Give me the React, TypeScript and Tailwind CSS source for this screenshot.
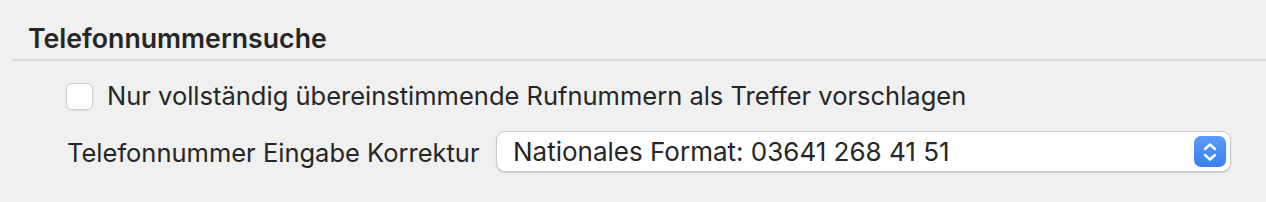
import React from "react";

export default function App() {
  return (
    <div
      className="w-[1266px] h-[202px] bg-[#f0f0f0] text-[#262626] overflow-hidden"
      style={{ fontFamily: "Inter, 'Noto Sans', sans-serif" }}
    >
      <div className="pt-[22px] pl-[28px] h-[59px]">
        <div className="text-[26.7px] leading-[32px] font-semibold">Telefonnummernsuche</div>
      </div>
      <div className="ml-[12px] h-[2px] bg-[#d9d9d9]" />
      <div className="pl-[66px] pt-[19px] flex items-center gap-[14px]">
        <div className="w-[27px] h-[27px] rounded-[6px] bg-white border border-[#cfcfcf] shadow-[0_0.5px_1px_rgba(0,0,0,0.08)]" />
        <span className="text-[25.5px] leading-[32px]">
          Nur vollständig übereinstimmende Rufnummern als Treffer vorschlagen
        </span>
      </div>
      <div className="pl-[67px] pt-[19px] flex items-center">
        <span className="text-[25.5px] leading-[32px] w-[429px] pt-[3px]">Telefonnummer Eingabe Korrektur</span>
        <div className="w-[735px] h-[41px] rounded-[9px] bg-white border border-[#c9c9c9] shadow-[0_1px_1.5px_rgba(0,0,0,0.15)] flex items-center pl-[16px] pr-[4px]">
          <span className="flex-1 text-[26px] leading-[32px]">Nationales Format: 03641 268 41 51</span>
          <div className="w-[32px] h-[31px] rounded-[7px] bg-gradient-to-b from-[#5a9bf8] to-[#3a7ff3] flex items-center justify-center">
            <svg width="16" height="22" viewBox="0 0 16 22" fill="none">
              <path d="M3 8 L8 3.5 L13 8" stroke="white" strokeWidth="2.4" strokeLinecap="round" strokeLinejoin="round" />
              <path d="M3 14 L8 18.5 L13 14" stroke="white" strokeWidth="2.4" strokeLinecap="round" strokeLinejoin="round" />
            </svg>
          </div>
        </div>
      </div>
    </div>
  );
}
